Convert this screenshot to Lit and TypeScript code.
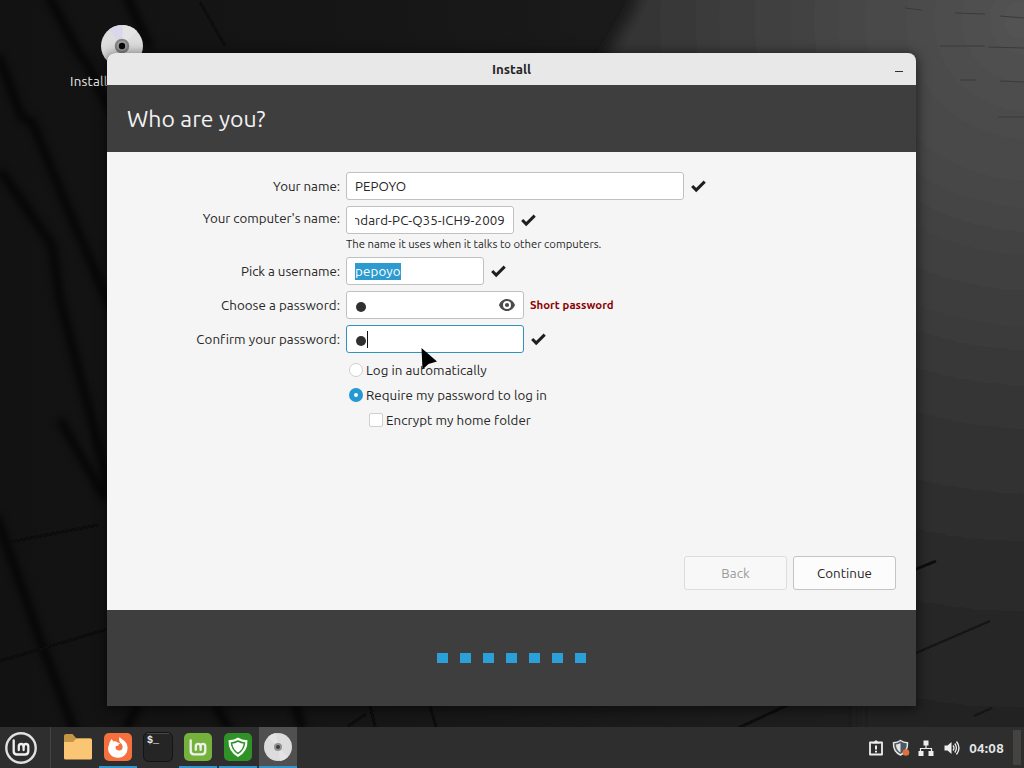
import { LitElement, css, html, svg } from 'lit'
import { customElement, property } from 'lit/decorators.js'

const mintMark = svg`
   <g fill="none" stroke-linecap="round" stroke-linejoin="round">
      <path d="M8.7 8.5 V19.2 Q8.7 22.5 12 22.5 H20 Q23.3 22.5 23.3 19.2 V14.5 Q23.3 12 20.95 12 Q18.6 12 18.6 14.5 V18" />
      <path d="M18.6 14.5 Q18.6 12 16.2 12 Q13.8 12 13.8 14.5 V18" />
   </g>
`

/** Check mark shown beside a valid field */
@customElement('valid-mark')
export class ValidMark extends LitElement {
   render() {
      return html`
         <svg width="16" height="14" viewBox="0 0 16 14">
            <path d="M1.2 7 L5.2 11.1 L13.7 2.6" />
         </svg>
      `
   }

   static styles = css`
      :host {
         display: block;
         height: 14px;
      }
      svg {
         display: block;
      }
      path {
         fill: none;
         stroke: #1d1f20;
         stroke-width: 3;
      }
   `
}

/** The dark tiled wallpaper */
@customElement('desk-wallpaper')
export class DeskWallpaper extends LitElement {
   render() {
      return html`
         <svg width="1024" height="768" viewBox="0 0 1024 768">
            <defs>
               <linearGradient id="base" x1="0" y1="0" x2="1" y2="0">
                  <stop offset="0" stop-color="#121212" />
                  <stop offset="0.3" stop-color="#151515" />
                  <stop offset="0.6" stop-color="#1a1a1a" />
                  <stop offset="1" stop-color="#222222" />
               </linearGradient>
               <radialGradient id="light" gradientUnits="userSpaceOnUse" cx="1024" cy="20" r="720">
                  <stop offset="0" stop-color="#535353" />
                  <stop offset="0.25" stop-color="#464646" />
                  <stop offset="0.53" stop-color="#353535" />
                  <stop offset="0.8" stop-color="#292929" />
                  <stop offset="1" stop-color="#232323" />
               </radialGradient>
               <filter id="soft"><feGaussianBlur stdDeviation="7" /></filter>
               <filter id="edge"><feGaussianBlur stdDeviation="3.5" /></filter>
               <filter id="thin"><feGaussianBlur stdDeviation="0.6" /></filter>
            </defs>
            <rect width="1024" height="768" fill="url(#base)" />
            <path d="M644 -20 L634 10 L595 75 L860 600 V790 H1060 V-20 Z" fill="url(#light)" filter="url(#soft)" />
            <g class="gap wide" filter="url(#edge)">
               <path d="M48 -5 L80 55 L86 62 L115 120" />
               <path d="M-2 55 L22 118 L32 122 L60 190 L120 330" />
               <path d="M126 -5 L150 48" />
               <path d="M0 170 L52 245 L60 300 L110 490" />
               <path d="M-4 515 L42 645 L76 735" />
               <path d="M60 420 L106 500" />
               <path d="M138 705 L125 730 M215 705 L230 730 M295 705 L303 730" />
            </g>
            <g class="gap" filter="url(#thin)">
               <path d="M200 2 L225 46" />
               <path d="M10 542 L98 525" />
               <path d="M0 661 L108 629" />
               <path d="M370 706 L376 730 M348 726 L366 714" />
               <path d="M430 706 L437 730" />
               <path d="M738 728 L790 704" />
               <path d="M914 570 L936 561" />
               <path class="faint" d="M916 653 L990 621" />
               <path class="faint" d="M974 716 L992 708" />
            </g>
            <g class="seam">
               <path d="M905 8 L922 10 M955 13 L985 14 M1000 16 L1024 18" />
               <path d="M940 46 H985 M988 47 L1024 48" />
               <path d="M960 80 H976 M1000 81 L1024 82" />
               <path d="M998 117 H1024" />
            </g>
         </svg>
      `
   }

   static styles = css`
      :host,
      svg {
         display: block;
      }
      .gap {
         fill: none;
         stroke: #0a0a0a;
         stroke-width: 2.5;
      }
      .wide {
         stroke: #050505;
         stroke-width: 8;
         opacity: 0.7;
      }
      .faint {
         stroke: #131313;
         stroke-width: 2;
      }
      .seam {
         stroke: #3a3a3a;
         stroke-width: 1;
      }
   `
}

/** The installer page asking for the account details */
@customElement('install-window')
export class InstallWindow extends LitElement {
   @property({ type: Number }) steps = 7

   render() {
      return html`
         <header class="titlebar">
            <span class="title">Install</span>
            <span class="minimize"></span>
         </header>
         <div class="heading"><span>Who are you?</span></div>
         <main>
            <div class="form">
               <label>Your name:</label>
               <div class="cell">
                  <div class="entry name">PEPOYO</div>
                  <valid-mark></valid-mark>
               </div>

               <label class="up">Your computer's name:</label>
               <div class="cell">
                  <!-- scrolled to the end, so the first letter is cut by the clip -->
                  <div class="entry host"><span class="clip"><span>ndard-PC-Q35-ICH9-2009</span></span></div>
                  <valid-mark></valid-mark>
               </div>

               <div class="hint">The name it uses when it talks to other computers.</div>

               <label>Pick a username:</label>
               <div class="cell">
                  <div class="entry user"><span class="selected">pepoyo</span></div>
                  <valid-mark></valid-mark>
               </div>

               <label class="wider">Choose a password:</label>
               <div class="cell">
                  <div class="entry pass">
                     <i class="dot"></i>
                     <svg class="eye" width="16" height="12" viewBox="0 0 16 12">
                        <path d="M8 0 C4.2 0 1.3 2.5 0 6 C1.3 9.5 4.2 12 8 12 C11.8 12 14.7 9.5 16 6 C14.7 2.5 11.8 0 8 0 Z M8 2 A4 4 0 0 1 8 10 A4 4 0 0 1 8 2 Z" fill-rule="evenodd" />
                        <circle cx="8" cy="6" r="2.1" />
                     </svg>
                  </div>
                  <span class="warning">Short password</span>
               </div>

               <label class="wider">Confirm your password:</label>
               <div class="cell">
                  <div class="entry pass focused"><i class="dot"></i><i class="caret"></i></div>
                  <valid-mark></valid-mark>
               </div>
            </div>

            <div class="options">
               <div class="option"><i class="radio"></i><span>Log in automatically</span></div>
               <div class="option"><i class="radio on"></i><span>Require my password to log in</span></div>
               <div class="option nested"><i class="box"></i><span>Encrypt my home folder</span></div>
            </div>

            <div class="buttons">
               <button class="back" disabled>Back</button>
               <button>Continue</button>
            </div>
         </main>
         <footer>
            ${Array.from({ length: this.steps }, () => html`<i></i>`)}
         </footer>
      `
   }

   static styles = css`
      :host {
         display: flex;
         flex-direction: column;
         width: 809px;
         height: 653px;
         border-radius: 8px 8px 0 0;
         overflow: hidden;
         background: #3e3e3e;
         box-shadow: 0 2px 12px 2px rgba(0, 0, 0, 0.5);
         color: #262626;
         font-size: 13.333px;
         letter-spacing: 0.04px;
      }

      .titlebar {
         display: grid;
         grid-template-columns: 1fr auto 1fr;
         align-items: center;
         height: 32px;
         background: #e8e8e8;
      }

      .title {
         grid-column: 2;
         font-weight: 700;
      }

      .minimize {
         justify-self: end;
         width: 8px;
         height: 1px;
         margin: 5px 13px 0 0;
         background: #303030;
      }

      .heading {
         display: flex;
         align-items: center;
         height: 67px;
         padding-left: 20px;
         color: #f2f2f2;
         font-size: 23px;
      }

      main {
         display: flex;
         flex-direction: column;
         flex: 1;
         padding: 20px 20px 20px 0;
         background: #f5f5f5;
      }

      .form {
         display: grid;
         grid-template-columns: 233px 1fr;
         grid-template-rows: 28px 28px 11px 28px 28px 28px;
         gap: 6px;
      }

      label {
         align-self: center;
         text-align: right;
         white-space: nowrap;
         letter-spacing: -0.03px;
      }

      .wider {
         letter-spacing: 0.06px;
      }

      .up {
         padding-bottom: 4px;
      }

      .cell {
         display: flex;
         align-items: center;
         gap: 7px;
      }

      .entry {
         display: flex;
         align-items: center;
         box-sizing: border-box;
         height: 28px;
         padding: 0 8px;
         border: 1px solid #c0c0c0;
         border-radius: 3px;
         background: #fff;
         white-space: nowrap;
      }

      .name {
         width: 338px;
      }

      .host {
         width: 168px;
         letter-spacing: 0.1px;
      }

      .user {
         width: 138px;
      }

      .pass {
         width: 178px;
      }

      .focused {
         border-color: #2f93ba;
      }

      .clip {
         display: flex;
         justify-content: flex-end;
         width: 150px;
         overflow: hidden;
      }

      .selected {
         background: #2d9bd0;
         color: #fff;
         line-height: 16px;
         padding-top: 1px;
         letter-spacing: 0.15px;
      }

      .hint {
         grid-column: 2;
         line-height: 7px;
         font-size: 11.3px;
         letter-spacing: 0;
         white-space: nowrap;
      }

      .dot {
         width: 10px;
         height: 10px;
         margin: 3px 0 0 1px;
         border-radius: 50%;
         background: #303030;
      }

      .eye {
         margin-left: auto;
         fill: #4b4b4b;
      }

      .caret {
         width: 1px;
         height: 17px;
         margin-left: 1px;
         background: #111;
      }

      .warning {
         margin-left: -1px;
         padding-bottom: 2px;
         color: #8b0000;
         font-size: 11.4px;
         font-weight: 700;
      }

      .options {
         display: flex;
         flex-direction: column;
         padding: 4px 0 0 242px;
      }

      .option {
         display: flex;
         align-items: center;
         gap: 3px;
         height: 25px;
         white-space: nowrap;
      }

      .option span {
         padding-top: 2px;
      }

      .nested {
         padding-left: 20px;
      }

      .radio,
      .box {
         box-sizing: border-box;
         width: 14px;
         height: 14px;
         border: 1px solid #cfcfcf;
         border-radius: 50%;
         background: #fff;
      }

      .box {
         border-radius: 2px;
      }

      .on {
         border: 5px solid #2398d3;
      }

      .buttons {
         display: flex;
         justify-content: flex-end;
         gap: 6px;
         margin-top: auto;
      }

      button {
         width: 103px;
         height: 34px;
         padding: 0;
         border: 1px solid #c4c4c4;
         border-radius: 3px;
         background: #fcfcfc;
         color: #262626;
         font: inherit;
         letter-spacing: inherit;
      }

      .back {
         border-color: #dcdcdc;
         background: #f8f8f8;
         color: #9c9c9c;
      }

      footer {
         display: flex;
         align-items: center;
         justify-content: center;
         gap: 12px;
         height: 96px;
      }

      footer i {
         width: 11px;
         height: 10px;
         background: #2a9fd8;
      }
   `
}

/** Bottom panel: menu, window list and tray */
@customElement('desk-panel')
export class DeskPanel extends LitElement {
   render() {
      return html`
         <div class="menu">
            <svg width="32" height="32" viewBox="0 0 32 32">
               <circle cx="16" cy="16" r="14.7" fill="none" stroke="#e0e0e0" stroke-width="2.4" />
               <g class="mark">${mintMark}</g>
            </svg>
         </div>
         <div class="tasks">
            <div class="task">
               <svg width="28" height="28" viewBox="0 0 28 28">
                  <path d="M0 3 Q0 1 2 1 H8.5 L12 5 H26 Q28 5 28 7 V12 H0 Z" fill="#c39645" />
                  <path d="M0 9 H9 L12 6 H26.5 Q28 6 28 7.5 V25 Q28 26.5 26.5 26.5 H1.5 Q0 26.5 0 25 Z" fill="#fac674" />
               </svg>
            </div>
            <div class="task open">
               <svg width="28" height="28" viewBox="0 0 28 28">
                  <rect width="28" height="28" rx="5" fill="#f5703c" />
                  <path d="M7.5 6 L9.5 8.5 Q12 7.8 13.5 9.5 L16.2 10.3 Q14 11.5 14.5 12.5 Q11 12.5 11.5 15 Q12.5 18 15.5 17.5 Q19 17 18.5 13 Q18 10.5 16 9.5 Q14.5 7 15.5 4 Q18 6.5 20.5 8 Q24 11 23.5 15.5 A9.7 9 0 1 1 5 12 Q5.5 8.5 7.5 6 Z" fill="#fff" />
               </svg>
            </div>
            <div class="task">
               <svg width="30" height="30" viewBox="0 0 30 30">
                  <rect x=".5" y=".5" width="29" height="29" rx="5" fill="#252525" stroke="#141414" />
                  <path d="M4 1.5 H26" stroke="#484848" />
                  <text x="4" y="11" fill="#eee" font-size="10" font-weight="bold" font-family="Liberation Mono, monospace">$_</text>
               </svg>
            </div>
            <div class="task open">
               <svg width="28" height="28" viewBox="0 0 28 28">
                  <rect width="28" height="28" rx="5" fill="#75b23c" />
                  <g class="mark" transform="translate(-2 -1.2)">${mintMark}</g>
               </svg>
            </div>
            <div class="task open">
               <svg width="28" height="28" viewBox="0 0 28 28">
                  <rect width="28" height="28" rx="5" fill="#2e9226" />
                  <path d="M14 4.5 Q17.5 7 23.5 7.2 Q24 18.5 14 24 Q4 18.5 4.5 7.2 Q10.5 7 14 4.5 Z" fill="#fff" />
                  <path d="M14 8 Q17 9.7 20.5 10 Q20 16.5 14 20.5 Q8 16.5 7.5 10 Q11 9.7 14 8 Z" fill="#fff" stroke="#2e9226" stroke-width="1.5" />
               </svg>
            </div>
            <div class="task open active">
               <svg width="28" height="28" viewBox="0 0 28 28">
                  <circle cx="14" cy="14" r="14" fill="#dcdcdc" />
                  <path d="M14 14 L4 4 A14 14 0 0 1 12 0 Z M14 14 L24 24 A14 14 0 0 1 16 28 Z" fill="#e4e4e4" />
                  <circle cx="14" cy="14" r="4" fill="#929292" />
                  <circle cx="14" cy="14" r="2" fill="#3d3d3d" />
               </svg>
            </div>
         </div>
         <div class="tray">
            <svg width="16" height="16" viewBox="0 0 16 16">
               <path d="M2 2.5 H14 V14.5 H2 Z" fill="none" stroke="#eee" stroke-width="1.8" stroke-linejoin="round" />
               <path d="M4.5 3.5 V2 H6 Q8 -1.5 10 2 H11.5 V3.5 Z" fill="#eee" />
               <path d="M8 5.5 V9.5 M8 10.7 V12.5" stroke="#eee" stroke-width="2" />
            </svg>
            <svg class="shield" width="18" height="18" viewBox="0 0 18 18">
               <path d="M8.5 1.5 Q11.5 3.5 15.5 3.7 Q16 12.5 8.5 16 Q1 12.5 1.5 3.7 Q5.5 3.5 8.5 1.5 Z" fill="#4d5963" stroke="#e4e4e4" stroke-width="1.5" />
               <path d="M8.5 4 V13.5 Q4 11 4 5.5 Q6.8 5.2 8.5 4 Z" fill="#e4e4e4" />
               <circle cx="14" cy="13.5" r="3.3" fill="#e0703c" />
            </svg>
            <svg class="network" width="16" height="16" viewBox="0 0 16 16">
               <path d="M5.5 0.5 H10.5 V5.5 H5.5 Z M.5 11 H5.5 V16 H.5 Z M10.5 11 H15.5 V16 H10.5 Z" fill="#eee" />
               <path d="M8 5 V8.5 M2.5 11 V8.5 H13.5 V11" fill="none" stroke="#eee" stroke-width="1.2" />
            </svg>
            <svg width="16" height="16" viewBox="0 0 16 16">
               <path d="M.5 5.5 H3.5 L7.5 2 V14 L3.5 10.5 H.5 Z" fill="#eee" />
               <path d="M9 5.5 Q11 8 9 10.5 M10.8 3.5 Q14 8 10.8 12.5 M12.5 1.5 Q17.5 8 12.5 14.5" fill="none" stroke="#eee" stroke-width="1.3" />
            </svg>
            <span class="clock">04:08</span>
            <i class="corner"></i>
         </div>
      `
   }

   static styles = css`
      :host {
         display: flex;
         box-sizing: border-box;
         height: 41px;
         background: #2e2e2e;
      }

      svg {
         display: block;
      }

      .menu {
         box-sizing: border-box;
         width: 51px;
         padding: 5px 0 0 5px;
         border-right: 1px solid #424242;
      }

      .mark {
         stroke: #f0f0f0;
         stroke-width: 2.3;
      }

      .tasks {
         display: flex;
         gap: 2px;
         padding-left: 8px;
      }

      .task {
         display: flex;
         align-items: center;
         justify-content: center;
         box-sizing: border-box;
         width: 38px;
         border-bottom: 2px solid transparent;
      }

      .open {
         border-color: #2f95cc;
      }

      .active {
         background: #505050;
      }

      .tray {
         display: flex;
         align-items: center;
         gap: 9px;
         margin-left: auto;
      }

      .shield {
         margin-left: -1px;
      }

      .network {
         margin: 0 1px 0 -1px;
      }

      .clock {
         padding-top: 2px;
         color: #e6e6e6;
         font-size: 13.333px;
         font-weight: 700;
         letter-spacing: 0.3px;
      }

      .corner {
         width: 8px;
         height: 35px;
         margin-right: 3px;
         background: #454342;
      }
   `
}

@customElement('app-root')
export class AppRoot extends LitElement {
   render() {
      return html`
         <desk-wallpaper></desk-wallpaper>
         <div class="launcher">
            <svg width="42" height="42" viewBox="0 0 42 42">
               <circle cx="21" cy="21" r="21" fill="#dedede" />
               <path d="M21 21 L8 5 A21 21 0 0 1 22 0 Z" fill="#d9d8ea" />
               <path d="M21 21 L22 0 A21 21 0 0 1 36 6 Z" fill="#e4e4e4" />
               <circle cx="21" cy="21" r="7.3" fill="#858585" />
               <circle cx="21" cy="21" r="5" fill="#a0a0a0" />
               <circle cx="21" cy="21" r="3.2" fill="#080808" />
            </svg>
            <span>Install</span>
         </div>
         <install-window></install-window>
         <desk-panel></desk-panel>
         <svg class="pointer" width="20" height="24" viewBox="0 0 20 24">
            <path d="M1.5 1 L2.5 22.5 L8.5 17 L17 14.5 Z" />
         </svg>
      `
   }

   static styles = css`
      :host {
         display: block;
         position: relative;
         width: 1024px;
         height: 768px;
         overflow: hidden;
         background: #151515;
         font-family: Ubuntu, 'Noto Sans', sans-serif;
      }

      desk-wallpaper {
         position: absolute;
         inset: 0;
      }

      .launcher {
         position: absolute;
         left: 70px;
         top: 25px;
         display: flex;
         flex-direction: column;
         gap: 7px;
         color: #eee;
         font-size: 13.333px;
         letter-spacing: 0.25px;
      }

      .launcher svg {
         margin-left: 31px;
      }

      install-window {
         position: absolute;
         left: 107px;
         top: 53px;
      }

      desk-panel {
         position: absolute;
         left: 0;
         right: 0;
         bottom: 0;
      }

      .pointer {
         position: absolute;
         left: 420px;
         top: 347px;
      }

      .pointer path {
         fill: #000;
      }
   `
}
